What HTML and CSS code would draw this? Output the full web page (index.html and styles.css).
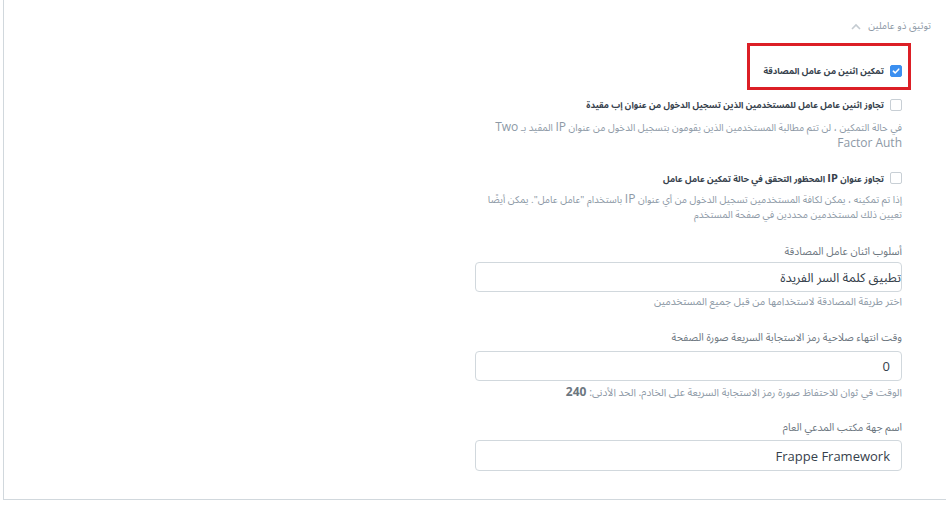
FILE: index.html
```html
<!DOCTYPE html>
<html lang="ar" dir="rtl">
<head>
<meta charset="utf-8">
<link rel="stylesheet" href="styles.css">
</head>
<body>
<div class="page">
  <div class="section-head">
    <span class="section-title">توثيق ذو عاملين</span>
    <svg class="chev" width="10" height="7" viewBox="0 0 10 7"><path d="M1 6 L5 2 L9 6" fill="none" stroke="#c4cbd1" stroke-width="1.6"/></svg>
  </div>
  <div class="column">
    <div class="check-row first">
      <span class="box checked"><svg width="12" height="12" viewBox="0 0 12 12"><path d="M2.8 6.2 L5 8.3 L9.3 3.8" fill="none" stroke="#fff" stroke-width="1.8" stroke-linecap="round" stroke-linejoin="round"/></svg></span>
      <span class="check-label">تمكين اثنين من عامل المصادقة</span>
      <div class="highlight"></div>
    </div>
    <div class="check-row second">
      <span class="box"></span>
      <span class="check-label">تجاوز اثنين عامل عامل للمستخدمين الذين تسجيل الدخول من عنوان إب مقيدة</span>
    </div>
    <div class="desc d1">
      <div class="line">في حالة التمكين ، لن تتم مطالبة المستخدمين الذين يقومون بتسجيل الدخول من عنوان <span class="lat">IP</span> المقيد بـ <span class="lat">Two</span></div>
      <div class="line"><span class="lat">Factor Auth</span></div>
    </div>
    <div class="check-row third">
      <span class="box"></span>
      <span class="check-label">تجاوز عنوان <span class="lat">IP</span> المحظور التحقق في حالة تمكين عامل عامل</span>
    </div>
    <div class="desc d2">
      <div class="line">إذا تم تمكينه ، يمكن لكافة المستخدمين تسجيل الدخول من أي عنوان <span class="lat">IP</span> باستخدام "عامل عامل". يمكن أيضًا</div>
      <div class="line">تعيين ذلك لمستخدمين محددين في صفحة المستخدم</div>
    </div>

    <div class="field f1">
      <label class="field-label">أسلوب اثنان عامل المصادقة</label>
      <div class="control select">تطبيق كلمة السر الفريدة</div>
      <p class="help">اختر طريقة المصادقة لاستخدامها من قبل جميع المستخدمين</p>
    </div>
    <div class="field f2">
      <label class="field-label">وقت انتهاء صلاحية رمز الاستجابة السريعة صورة الصفحة</label>
      <div class="control input"><span class="lat-val">0</span></div>
      <p class="help">الوقت في ثوان للاحتفاظ صورة رمز الاستجابة السريعة على الخادم. الحد الأدنى: <b class="lat">240</b></p>
    </div>
    <div class="field f3">
      <label class="field-label">اسم جهة مكتب المدعي العام</label>
      <div class="control input"><span class="lat-val">Frappe Framework</span></div>
    </div>
  </div>
</div>
</body>
</html>
```

FILE: styles.css
```css
html, body {
  margin: 0;
  padding: 0;
  background: #fff;
}
body {
  font-family: "Noto Sans Arabic", "Open Sans", sans-serif;
  color: #36414c;
  font-size: 10.3px;
}
.lat {
  font-family: "Open Sans", sans-serif;
  font-size: 12px;
}
.page {
  margin-left: 3px;
  height: 500px;
  border-left: 1px solid #d1d8dd;
  border-bottom: 1px solid #d1d8dd;
  box-sizing: border-box;
  position: relative;
}
.section-head {
  display: flex;
  align-items: center;
  gap: 7px;
  padding: 18px 15px 0 0;
  height: 16px;
  line-height: 16px;
  color: #8d99a6;
  font-size: 9.8px;
}
.chev { display: block; }
.column {
  width: 427px;
  margin-right: 44px;
}
.check-row {
  display: flex;
  align-items: center;
  gap: 6px;
  height: 20px;
  position: relative;
}
.check-row.first { margin-top: 27px; }
.check-row.second { margin-top: 14px; }
.check-row.third { margin-top: 17px; }
.box {
  width: 12px;
  height: 12px;
  border: 1px solid #c8cfd5;
  border-radius: 2px;
  box-sizing: border-box;
  background: #fff;
  display: flex;
  align-items: center;
  justify-content: center;
  flex: none;
}
.box.checked {
  background: #3b8ff0;
  border-color: #3b8ff0;
}
.box svg { display: block; }
.check-label {
  font-weight: bold;
  color: #36414c;
  font-size: 8.8px;
  line-height: 16px;
  height: 16px;
  white-space: nowrap;
}
.check-label .lat { font-size: 11px; }
.highlight {
  position: absolute;
  right: -9px;
  top: -18px;
  width: 164px;
  height: 47px;
  border: 3px solid #dc1f26;
  box-sizing: border-box;
}
.desc {
  display: flex;
  flex-direction: column;
  color: #8d99a6;
  font-size: 9.8px;
}
.desc .line {
  white-space: nowrap;
}
.desc.d1 { margin-top: 4px; }
.desc.d1 .line { height: 16px; line-height: 16px; }
.desc.d2 { margin-top: 2px; }
.desc.d2 .line { height: 17px; line-height: 17px; }
.field-label {
  display: block;
  color: #6c7680;
  font-size: 10.5px;
  line-height: 16px;
  height: 16px;
}
.f1 { margin-top: 20px; }
.f1 .control { margin-top: 2px; }
.f2 { margin-top: 20px; }
.f2 .control { margin-top: 5px; }
.f2 .help { margin-top: 3px; }
.f3 { margin-top: 20px; }
.f3 .control { margin-top: 4px; height: 31px; }
.control {
  height: 30px;
  border: 1px solid #d1d8dd;
  border-radius: 4px;
  box-sizing: border-box;
  display: flex;
  align-items: center;
  font-size: 12.8px;
  color: #36414c;
}
.control.select { padding-right: 0; }
.control.input { padding-right: 11px; }
.lat-val {
  font-family: "Open Sans", sans-serif;
  font-size: 13px;
  direction: ltr;
}
.help {
  margin: 2px 0 0 0;
  color: #8d99a6;
  font-size: 10.4px;
  line-height: 16px;
  height: 16px;
}
.help b { color: #6c7680; font-weight: bold; }
```
